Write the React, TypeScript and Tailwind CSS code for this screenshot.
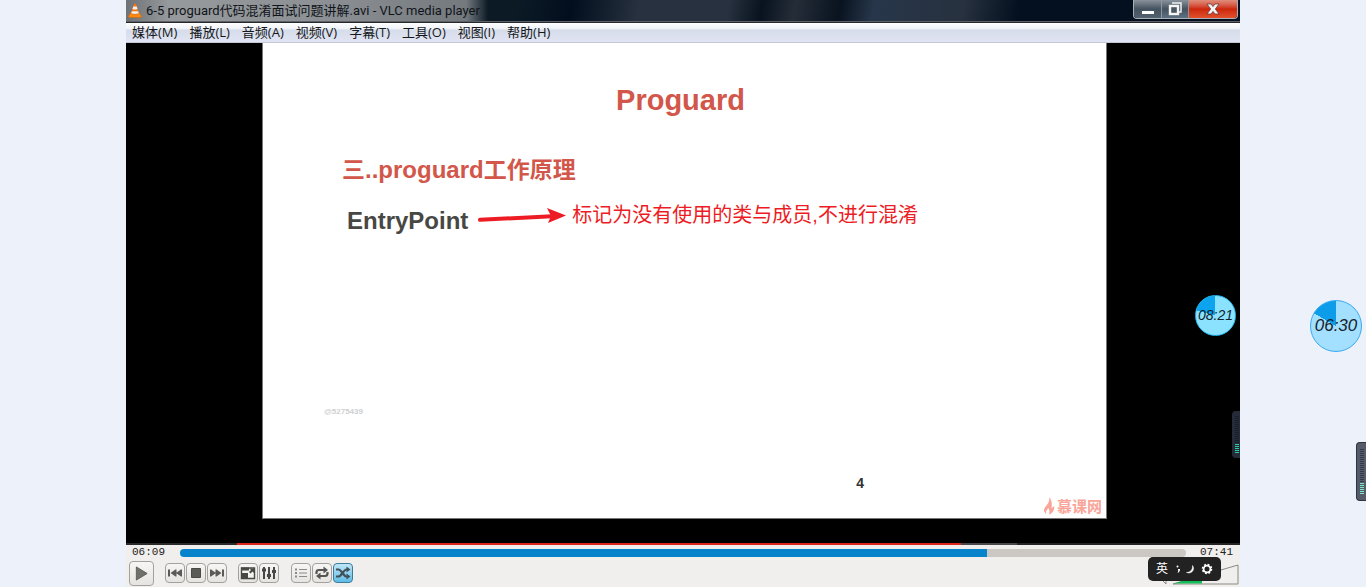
import type { ReactNode } from "react";

const menus = ["媒体(M)", "播放(L)", "音频(A)", "视频(V)", "字幕(T)", "工具(O)", "视图(I)", "帮助(H)"];

function VlcCone() {
  return (
    <svg viewBox="0 0 14 15" className="h-[15px] w-3.5 shrink-0" aria-hidden="true">
      <path d="M2.500 10h9l2 3.200q0 1.300-1.500 1.300H2Q.5 14.500.5 13.200z" fill="#f58a17" stroke="#cf6307" strokeWidth=".6" />
      <path d="M6 .8h2L11 11q-4 2-8 0z" fill="#f47410" />
      <path d="M5.300 3.400h3.400l.9 2.600q-2.600 1-5.200 0z" fill="#f3ede6" />
      <path d="M3.800 8.200h6.400l.6 2q-3.800 1.600-7.600 0z" fill="#f3ede6" />
    </svg>
  );
}

function TitleBar() {
  return (
    <header className="flex h-[22px] items-center justify-between border-b border-[#5d6066] bg-[linear-gradient(100deg,#0c1a26_0%,#0c1a26_35%,#020e1e_40%,#27313f_46%,#27313f_54%,#08131f_57%,#252d38_60%,#08131f_64%,#27364a_67%,#27313f_75%,#04101f_80%,#04101f_100%)]">
      <div className="flex h-full items-center gap-1 bg-[linear-gradient(90deg,#6e7276_0%,#979a9c_12%,#8c9094_55%,#74797e_94%,transparent_100%)] pr-2 pl-0.5">
        <VlcCone />
        <h1 className="font-['Roboto','Noto_Sans_CJK_SC',sans-serif] text-[13px] leading-5 text-[#10151a]">6-5 proguard代码混淆面试问题讲解.avi - VLC media player</h1>
      </div>
      <div className="mr-0.5 flex h-[19px] self-start overflow-hidden rounded-b border border-t-0 border-[#a9b0b8]">
        <button aria-label="最小化" className="flex w-7 items-end justify-center border-r border-[#8d959e] bg-linear-to-b from-[#8a939d] via-[#45525f] to-[#53626f] pb-1">
          <span className="h-[3px] w-3 bg-white" />
        </button>
        <button aria-label="还原" className="flex w-[27px] items-center justify-center border-r border-[#8d959e] bg-linear-to-b from-[#8a939d] via-[#45525f] to-[#5d7184]">
          <svg viewBox="0 0 14 14" className="size-[14px]">
            <path d="M4 1h9v9h-2" fill="none" stroke="#f2f2f2" strokeWidth="1.500" />
            <rect x="2" y="4" width="8" height="8" fill="#4a5660" stroke="#f5f5f5" strokeWidth="2.400" />
          </svg>
        </button>
        <button aria-label="关闭" className="flex w-12 items-center justify-center bg-linear-to-b from-[#df8e7e] via-[#cc2508] to-[#e0512c]">
          <svg viewBox="0 0 14 12" className="h-3 w-3.5">
            <path d="M1 1h4l2 2.600L9 1h4L9.300 6l3.700 5H9L7 8.400 5 11H1l3.700-5z" fill="#f4f4f4" stroke="#5b3030" strokeWidth=".7" />
          </svg>
        </button>
      </div>
    </header>
  );
}

function MenuBar() {
  return (
    <nav className="flex h-[21px] items-center gap-3 border-t border-b border-t-[#25292d] border-b-[#c5c7d6] bg-[linear-gradient(180deg,#ffffff_0%,#eef1f7_32%,#d5dcea_36%,#e2e5f3_100%)] px-1.5 pb-0.5 text-[13px]">
      {menus.map((m) => (
        <button key={m} className="leading-4 whitespace-nowrap text-[#15171a]">{m}</button>
      ))}
    </nav>
  );
}

function Slide() {
  return (
    <article className="mr-[133px] ml-[136px] flex min-h-[476px] flex-col border border-t-0 border-[#777] bg-white px-1">
      <h2 className="mr-2 pt-[41px] text-center font-['Liberation_Sans',sans-serif] text-[29px] leading-8 font-bold text-[#d2574a]">Proguard</h2>
      <h3 className="mt-[38px] ml-[75px] font-['Liberation_Sans','Noto_Sans_CJK_SC',sans-serif] text-[23px] leading-8 font-bold text-[#d2574a]">
        三<span className="text-[24px]">..proguard</span>工作原理
      </h3>
      <div className="mt-[19px] ml-20 flex items-start">
        <p className="font-['Liberation_Sans',sans-serif] text-[24px] leading-8 font-bold text-[#474743]">EntryPoint</p>
        <svg viewBox="0 0 90 18" className="ml-2.5 h-[18px] w-[90px]" aria-hidden="true">
          <path d="M2 14.800 74 11.300" stroke="#ed1c24" strokeWidth="4" strokeLinecap="round" />
          <path d="m69 3 19 7.500-18 7.500 3-7z" fill="#ed1c24" />
        </svg>
        <p className="ml-1 font-['Liberation_Sans','Noto_Sans_CJK_SC',sans-serif] text-[20px] leading-5 whitespace-nowrap text-[#ed1c24]">标记为没有使用的类与成员,不进行混淆</p>
      </div>
      <p className="mt-[169px] ml-[57px] font-['Liberation_Sans',sans-serif] text-[8px] leading-3 font-bold text-[#cfcfcf]">@5275439</p>
      <p className="mt-[57px] mr-[238px] text-right font-['Liberation_Sans',sans-serif] text-[14px] leading-4 font-bold text-[#333]">4</p>
      <div className="mt-1.5 flex items-center justify-end text-[#f9a59a]">
        <svg viewBox="0 0 12 18" className="h-[18px] w-3" aria-hidden="true">
          <path d="M6 0C7 4 5.500 6 3.500 8.500.5 12 0 14 3 17c-.5-3 1-4 2.500-6 .5 2 1.500 3 .5 6.500 4-1 6-5 5-8.500-.8 1.200-1.500 1.800-2.500 2C9.200 7 9 3 6 0z" fill="currentColor" />
        </svg>
        <span className="ml-0.5 text-[15px] leading-[18px] font-bold">慕课网</span>
      </div>
    </article>
  );
}

function Tool({ label, children, active = false }: { label: string; children: ReactNode; active?: boolean }) {
  return (
    <button
      aria-label={label}
      className={
        active
          ? "flex size-5 items-center justify-center rounded-sm border border-[#3d7d9a] bg-linear-to-b from-[#bfe6f8] to-[#5dbce6] text-[#41525a]"
          : "flex size-5 items-center justify-center rounded-sm border border-[#a3a19d] bg-linear-to-b from-[#f7f6f5] to-[#e6e4e1] text-[#5a5a56]"
      }
    >
      <svg viewBox="0 0 16 16" className="size-4" fill="currentColor" aria-hidden="true">{children}</svg>
    </button>
  );
}

function Controls() {
  return (
    <footer className="bg-[#f1efed] px-[3px] pb-px">
      <div className="flex h-[15px] items-center pr-1 pl-[3px] font-['Liberation_Mono',monospace] text-[11px] leading-[15px] text-[#222]">
        <span>06:09</span>
        <input
          type="range"
          aria-label="播放进度"
          min={0}
          max={461}
          defaultValue={369}
          className="mr-3.5 ml-[15px] h-2 min-w-0 flex-1 appearance-none rounded-sm bg-[linear-gradient(90deg,#0783cc_80.2%,#cbc8c4_80.2%)] [&::-webkit-slider-thumb]:size-0 [&::-webkit-slider-thumb]:appearance-none"
        />
        <span>07:41</span>
      </div>
      <div className="flex h-[26px] items-center">
        <button aria-label="播放" className="flex size-[25px] items-center justify-center rounded-sm border border-[#a3a19d] bg-linear-to-b from-[#f7f6f5] to-[#e6e4e1]">
          <svg viewBox="0 0 16 18" className="h-[17px] w-[15px]"><path d="M2.500 2 14 9 2.500 16z" fill="#6f6f6b" stroke="#5c5c58" /></svg>
        </button>
        <div className="ml-[11px] flex gap-px">
          <Tool label="上一个"><path d="M1 4.500h2v7H1zM8.500 4.500v7L3.500 8zM14 4.500v7L9 8zM8 4.500h1.500v7H8zM13.500 4.500H15v7h-1.500z" /></Tool>
          <Tool label="停止"><path d="M3.500 3.500h9v9h-9z" stroke="#4a4a47" /></Tool>
          <Tool label="下一个"><path d="M15 4.500h-2v7h2zM7.500 4.500v7L12.500 8zM2 4.500v7L7 8zM8 4.500H6.500v7H8zM2.500 4.500H1v7h1.500z" /></Tool>
        </div>
        <div className="ml-[11px] flex gap-px">
          <Tool label="全屏">
            <path d="M1.500 3h13v10.500h-13z" fill="#f4f4f2" stroke="#484845" strokeWidth="1.400" />
            <path d="M1 2.500h8V5.500H1zM2 8h6v5.500H2z" fill="#484845" />
            <path d="M9.500 3.500h4.500V8l-1.500-1.500L10.500 8.500 9 7l2-2z" fill="#484845" />
          </Tool>
          <Tool label="扩展设置">
            <path d="M3 2v12M8 2v12M13 2v12" fill="none" stroke="#484845" strokeWidth="2" />
            <path d="M1 3.500h4v3H1zM6 9h4v3H6zM11 5h4v3h-4z" fill="#484845" />
          </Tool>
        </div>
        <div className="ml-3 flex gap-px">
          <Tool label="播放列表"><path d="M2 3.500h2v2H2zM2 7h2v2H2zM2 10.500h2v2H2zM6 4h8v1H6zM6 7.500h8v1H6zM6 11h8v1H6z" fill="#8b8a86" /></Tool>
          <Tool label="循环">
            <path d="M2.500 9V7.500q0-2.500 2.500-2.500h5M13.500 7v1.500q0 2.500-2.500 2.500H6" fill="none" stroke="#555551" strokeWidth="2.200" />
            <path d="M9.500 1.500 14 5 9.500 8.500zM6.500 7.500v7L2 11z" fill="#555551" />
          </Tool>
          <Tool label="随机" active>
            <path d="M1 4.500h2.500c3 0 5 7 8 7H13M1 11.500h2.500c3 0 5-7 8-7H13" fill="none" stroke="currentColor" strokeWidth="2.200" />
            <path d="m11.500 1.500 4 3-4 3zM11.500 8.500l4 3-4 3z" />
          </Tool>
        </div>
        <svg viewBox="0 0 80 22" className="-mr-0.5 ml-auto h-[22px] w-20 self-end" aria-label="音量" role="img">
          <path d="M2 15h5v5z" fill="#f1efed" stroke="#8b8982" />
          <path d="M14 20 79 1v19z" fill="#f1efed" stroke="#8b8982" />
          <path d="M15 19.500 43 11v8.500z" fill="#12bd57" />
        </svg>
      </div>
    </footer>
  );
}

function Meter({ large = false }: { large?: boolean }) {
  const bars = large ? 23 : 19;
  const lit = large ? 6 : 5;
  return (
    <div
      className={
        large
          ? "flex h-[59px] w-2.5 flex-col items-end justify-center gap-px rounded-l border border-r-0 border-[#30343d] bg-[#555b69] pr-0.5"
          : "flex h-[47px] w-2 flex-col items-end justify-center gap-px rounded-l border border-r-0 border-[#252c37] bg-[#252b38] pr-px"
      }
    >
      {Array.from({ length: bars }, (_, i) => (
        <span
          key={i}
          className={
            i >= bars - lit
              ? large ? "h-px w-1 bg-[#7ee8c5]" : "h-px w-1 bg-[#22d0a4]"
              : large ? "h-px w-1 bg-[#343a47]" : "h-px w-1 bg-[#191e29]"
          }
        />
      ))}
    </div>
  );
}

export default function App() {
  return (
    <div className="relative min-h-screen bg-[#edf2fa] px-[126px] font-['Open_Sans','Noto_Sans_CJK_SC',sans-serif]">
      <main className="relative flex min-h-screen flex-col bg-black">
        <TitleBar />
        <MenuBar />
        <section className="flex-1 pb-6">
          <Slide />
        </section>
        <div className="h-0.5 bg-[linear-gradient(90deg,#2a2a2a_0%,#2a2a2a_10%,#e0251b_10%,#e0251b_75%,#484848_75%,#484848_80%,#242424_80%)]" />
        <Controls />

        <div className="absolute top-[295px] right-1 flex size-[41px] items-center justify-center rounded-full border border-[#23b7f2] bg-[conic-gradient(#8be2ff_0deg,#8be2ff_285deg,#0ca4ee_285deg)] font-['Liberation_Sans',sans-serif] text-[14px] text-[#10222b] italic">
          08:21
        </div>
        <div className="absolute top-[411px] right-0"><Meter /></div>
        <div className="absolute right-[19px] bottom-1.5 flex h-6 w-[73px] items-center gap-1.5 rounded-[5px] bg-[#222] pl-2 text-white">
          <span className="text-[12px] leading-4">英</span>
          <svg viewBox="0 0 42 16" className="h-4 w-[42px]" aria-hidden="true">
            <circle cx="3.500" cy="5.500" r="1" fill="#fff" />
            <path d="M4 8h2c0 2-.8 3.500-2.500 4 .6-1 .8-2 .5-4z" fill="#fff" />
            <path d="M18.500 4.500C21.500 8.500 17.500 13.500 12.500 11.500 16.500 11.500 18.800 8.500 18.500 4.500z" fill="#fff" stroke="#fff" strokeWidth=".5" />
            <circle cx="33" cy="8" r="3.400" fill="none" stroke="#fff" strokeWidth="1.800" />
            <circle cx="33" cy="8" r="4.600" fill="none" stroke="#fff" strokeWidth="1.400" strokeDasharray="1.900 1.713" />
          </svg>
        </div>
      </main>

      <div className="absolute top-[300px] right-1 flex size-[52px] items-center justify-center rounded-full border border-[#3aaaf0] bg-[conic-gradient(#a3dfff_0deg,#a3dfff_300deg,#0c9cea_300deg)] font-['Liberation_Sans',sans-serif] text-[17px] text-[#16222b] italic">
        06:30
      </div>
      <div className="absolute top-[442px] right-0"><Meter large /></div>
    </div>
  );
}
